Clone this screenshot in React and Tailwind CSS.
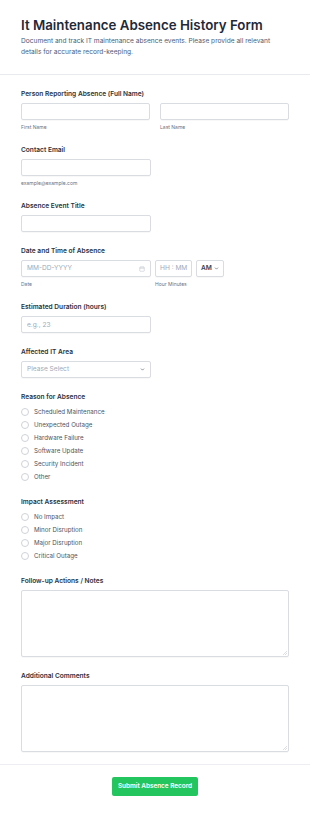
import { useState } from 'react';

function Label({ children }) {
    return <div className="text-[6.6px] leading-[10px] font-semibold text-[#2b3340] mb-[4px]">{children}</div>;
}

function Sub({ children }) {
    return <div className="text-[5px] leading-[7px] text-[#6b7280] mt-[4px] whitespace-nowrap">{children}</div>;
}

const inputCls = 'block h-[17px] rounded-[2px] border border-[#d9dce1] bg-white px-[5px] text-[6.6px] text-[#374151] placeholder:text-[#a3aab5] outline-none shadow-[0_1px_1px_rgba(0,0,0,0.03)] whitespace-nowrap';

function Chevron() {
    return (
        <svg width="5" height="5" viewBox="0 0 24 24" fill="none" stroke="#4b5563" strokeWidth="3" strokeLinecap="round" strokeLinejoin="round" className="shrink-0">
            <path d="M6 9l6 6 6-6" />
        </svg>
    );
}

function Radios({ name, options }) {
    const [val, setVal] = useState('');
    return (
        <div className="mt-[-1px]">
            {options.map((o) => (
                <label key={o} className="flex items-center h-[13px] gap-[5px] cursor-pointer">
                    <input type="radio" name={name} checked={val === o} onChange={() => setVal(o)} className="sr-only" />
                    <span className="w-[8px] h-[8px] rounded-full border border-[#cfd3d9] bg-white shrink-0" />
                    <span className="text-[6.2px] text-[#4b5563]">{o}</span>
                </label>
            ))}
        </div>
    );
}

function TextArea() {
    return (
        <div className="relative">
            <textarea className="block w-full h-[67px] resize-none rounded-[2px] border border-[#d9dce1] bg-white p-[5px] text-[7px] outline-none shadow-[0_1px_1px_rgba(0,0,0,0.03)]" />
            {/* resize grip */}
            <svg width="4" height="4" viewBox="0 0 4 4" className="absolute right-[2px] bottom-[2px] pointer-events-none">
                <path d="M4 0L0 4M4 2L2 4" stroke="#c4c8ce" strokeWidth="0.6" />
            </svg>
        </div>
    );
}

export default function App() {
    return (
        <div className="w-[310px] min-h-[813px] bg-white" style={{ fontFamily: 'Inter, "Noto Sans", sans-serif' }}>
            {/* header */}
            <div className="px-[21px] pt-[16px] pb-[16px] border-b border-[#e8eaed]">
                <h1 className="text-[13.3px] leading-[19px] font-semibold text-[#1f2937]">It Maintenance Absence History Form</h1>
                <p className="text-[6.6px] leading-[11px] text-[#4d5b74] mt-[1px]">
                    Document and track IT maintenance absence events. Please provide all relevant details for accurate record-keeping.
                </p>
            </div>

            {/* form */}
            <form className="px-[21px] pt-[14px] pb-[12px] flex flex-col gap-[14px] border-b border-[#eceef1]" onSubmit={(e) => e.preventDefault()}>
                <div>
                    <Label>Person Reporting Absence (Full Name)</Label>
                    <div className="grid grid-cols-2 gap-[10px]">
                        <div>
                            <input className={inputCls + ' w-full'} />
                            <Sub>First Name</Sub>
                        </div>
                        <div>
                            <input className={inputCls + ' w-full'} />
                            <Sub>Last Name</Sub>
                        </div>
                    </div>
                </div>

                <div>
                    <Label>Contact Email</Label>
                    <input className={inputCls + ' w-[130px]'} />
                    <Sub>example@example.com</Sub>
                </div>

                <div>
                    <Label>Absence Event Title</Label>
                    <input className={inputCls + ' w-[130px]'} />
                </div>

                <div>
                    <Label>Date and Time of Absence</Label>
                    <div className="flex gap-[4px]">
                        <div>
                            <div className={inputCls + ' w-[130px] flex items-center justify-between'}>
                                <span className="text-[#a3aab5]">MM-DD-YYYY</span>
                                <svg width="6" height="6" viewBox="0 0 24 24" fill="none" stroke="#b6bcc5" strokeWidth="2">
                                    <rect x="3" y="4" width="18" height="17" rx="2" />
                                    <path d="M3 9h18M8 2v4M16 2v4" />
                                </svg>
                            </div>
                            <Sub>Date</Sub>
                        </div>
                        <div>
                            <div className={inputCls + ' w-[37px] flex items-center !px-[4px]'}>
                                <span className="text-[#a3aab5]">HH : MM</span>
                            </div>
                            <Sub>Hour Minutes</Sub>
                        </div>
                        <div className={inputCls + ' w-[28px] flex items-center justify-between !px-[4px] font-semibold text-[#1f2937]'}>
                            <span>AM</span>
                            <Chevron />
                        </div>
                    </div>
                </div>

                <div>
                    <Label>Estimated Duration (hours)</Label>
                    <input className={inputCls + ' w-[130px]'} placeholder="e.g., 23" />
                </div>

                <div>
                    <Label>Affected IT Area</Label>
                    <div className={inputCls + ' w-[130px] flex items-center justify-between'}>
                        <span className="text-[#a3aab5]">Please Select</span>
                        <Chevron />
                    </div>
                </div>

                <div>
                    <Label>Reason for Absence</Label>
                    <Radios name="reason" options={['Scheduled Maintenance', 'Unexpected Outage', 'Hardware Failure', 'Software Update', 'Security Incident', 'Other']} />
                </div>

                <div>
                    <Label>Impact Assessment</Label>
                    <Radios name="impact" options={['No Impact', 'Minor Disruption', 'Major Disruption', 'Critical Outage']} />
                </div>

                <div>
                    <Label>Follow-up Actions / Notes</Label>
                    <TextArea />
                </div>

                <div>
                    <Label>Additional Comments</Label>
                    <TextArea />
                </div>
            </form>

            {/* footer */}
            <div className="flex justify-center pt-[12px] pb-[17px]">
                <button type="button" className="h-[19px] px-[6px] rounded-[2px] bg-[#22c55e] text-white text-[6.4px] font-semibold">
                    Submit Absence Record
                </button>
            </div>
        </div>
    );
}
